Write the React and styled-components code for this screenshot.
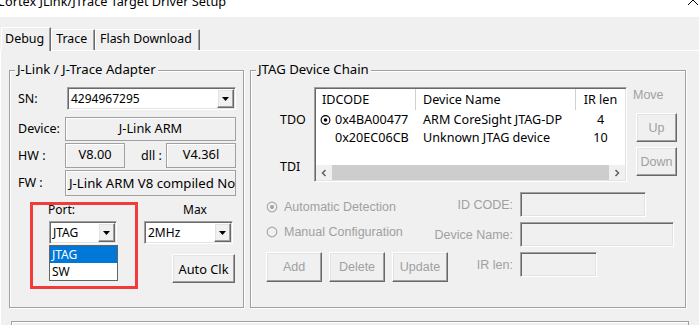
import React from 'react';
import styled, { createGlobalStyle, css } from 'styled-components';

const GlobalStyle = createGlobalStyle`
  html, body {
    margin: 0;
    padding: 0;
    background: #f0f0f0;
  }
  body {
    font-family: "Noto Sans", "Liberation Sans", sans-serif;
    font-size: 12px;
    color: #000;
  }
`;

// classic win32 3d edges
const sunken = css`
  border: 1px solid;
  border-color: #a0a0a0 #fff #fff #a0a0a0;
  box-shadow: inset 1px 1px 0 #696969, inset -1px -1px 0 #e3e3e3;
`;

const raised = css`
  border: 1px solid;
  border-color: #fff #696969 #696969 #fff;
  box-shadow: inset -1px -1px 0 #a0a0a0, inset 1px 1px 0 #e3e3e3;
`;

const disabledText = css`
  font-family: "Liberation Sans", Arial, sans-serif;
  font-size: 12.5px;
  color: #a0a0a0;
`;

const Window = styled.div`
  width: 699px;
  height: 325px;
  overflow: hidden;
  background: #f0f0f0;
  display: flex;
  flex-direction: column;
`;

const TitleBar = styled.div`
  flex: none;
  height: 17px;
  background: #fff;
  display: flex;
  justify-content: space-between;
  align-items: flex-start;
  overflow: hidden;
`;

const TitleText = styled.span`
  margin: -5px 0 0 -3px;
  font-size: 12.7px;
  line-height: 12px;
  white-space: nowrap;
`;

const TabStrip = styled.div`
  flex: none;
  display: flex;
  align-items: flex-end;
  height: 23px;
  margin-top: 10px;
  padding-left: 1px;
  position: relative;
  z-index: 1;
`;

const Tab = styled.div`
  box-sizing: border-box;
  height: ${(p) => (p.$active ? 24 : 21)}px;
  margin-bottom: ${(p) => (p.$active ? -1 : 0)}px;
  padding: ${(p) => (p.$active ? '3px 6px 0 3px' : '1px 7px 0 4px')};
  border-top: 1px solid #fff;
  border-left: 1px solid #fff;
  border-right: 1px solid #696969;
  box-shadow: inset -1px 0 0 #a0a0a0;
  background: #f0f0f0;
  line-height: 16px;
  white-space: nowrap;
  font-size: ${(p) => (p.$active ? 12.5 : 12.3)}px;
`;

const TabPanel = styled.div`
  flex: 1;
  border-top: 1px solid #fff;
  border-left: 1px solid #fff;
  padding: 19px 0 0 8px;
`;

const GroupRow = styled.div`
  display: flex;
  gap: 6px;
`;

const Group = styled.div`
  position: relative;
  box-sizing: border-box;
  width: ${(p) => p.$w}px;
  height: 238px;
  border: 1px solid #a0a0a0;
  box-shadow: inset 1px 1px 0 #fff, 1px 1px 0 #fff;
  padding: 16px 0 0 ${(p) => p.$pad}px;
`;

const GroupTitle = styled.span`
  position: absolute;
  top: -9px;
  left: 5px;
  padding: 0 2px;
  background: #f0f0f0;
  font-size: 13.2px;
  line-height: 15px;
  white-space: nowrap;
`;

const FieldRow = styled.div`
  display: flex;
  align-items: center;
  height: ${(p) => p.$h}px;
  margin-top: ${(p) => p.$mt || 0}px;
`;

const Label = styled.span`
  flex: none;
  width: ${(p) => p.$w}px;
  margin-left: ${(p) => p.$ml || 0}px;
  font-size: 12.5px;
  line-height: 14px;
  white-space: nowrap;
`;

const StaticBox = styled.div`
  box-sizing: border-box;
  width: ${(p) => p.$w}px;
  height: 100%;
  border: 1px solid #a0a0a0;
  box-shadow: inset 1px 1px 0 #fff;
  display: flex;
  align-items: center;
  justify-content: ${(p) => (p.$left ? 'flex-start' : 'center')};
  padding: ${(p) => (p.$left ? '0 0 1px 3px' : '0 0 3px')};
  font-size: ${(p) => (p.$left ? 13.2 : 12.8)}px;
  overflow: hidden;
  white-space: nowrap;
`;

const Combo = styled.div`
  ${sunken};
  box-sizing: border-box;
  flex: none;
  width: ${(p) => p.$w}px;
  height: 23px;
  padding: 1px;
  background: #fff;
  display: flex;
`;

const ComboText = styled.span`
  flex: 1;
  padding-left: 2px;
  line-height: 19px;
  white-space: nowrap;
  overflow: hidden;
`;

const ComboButton = styled.span`
  ${raised};
  box-sizing: border-box;
  width: 17px;
  background: #f0f0f0;
  display: flex;
  align-items: center;
  justify-content: center;
`;

const Lower = styled.div`
  display: flex;
  gap: 6px;
  margin: 6px 0 0 12px;
`;

const Highlight = styled.div`
  box-sizing: border-box;
  width: 108px;
  height: 87px;
  border: 3px solid #f23b3b;
  padding-left: 16px;
  display: flex;
  flex-direction: column;
`;

const SmallLabel = styled.span`
  line-height: 14px;
  margin: ${(p) => p.$m};
  font-size: ${(p) => p.$size || 12}px;
`;

const DropList = styled.div`
  box-sizing: border-box;
  width: 69px;
  height: 36px;
  margin-top: 1px;
  border: 1px solid #646464;
  background: #fff;
  display: flex;
  flex-direction: column;
`;

const DropItem = styled.div`
  height: 17px;
  line-height: 17px;
  padding-left: 2px;
  background: ${(p) => (p.$sel ? '#0078d7' : 'transparent')};
  color: ${(p) => (p.$sel ? '#fff' : '#000')};
`;

const MaxColumn = styled.div`
  width: 91px;
  display: flex;
  flex-direction: column;
`;

const Button = styled.div`
  ${raised};
  box-sizing: border-box;
  flex: none;
  width: ${(p) => p.$w}px;
  height: ${(p) => p.$h || 29}px;
  margin: ${(p) => p.$m || 0};
  display: flex;
  align-items: center;
  justify-content: center;
  background: #f0f0f0;
  ${(p) => (p.$disabled ? disabledText : 'font-size: 12.8px;')}
`;

const ChainTop = styled.div`
  display: flex;
`;

const PinColumn = styled.div`
  box-sizing: border-box;
  width: 63px;
  padding-left: 29px;
  display: flex;
  flex-direction: column;
`;

const ListView = styled.div`
  ${sunken};
  box-sizing: border-box;
  width: 313px;
  height: 95px;
  padding: 1px;
  background: #fff;
  display: flex;
  flex-direction: column;
  font-size: 12.6px;
`;

const ListHeader = styled.div`
  display: flex;
  height: 21px;
  flex: none;
`;

const HeaderCell = styled.div`
  box-sizing: border-box;
  width: ${(p) => p.$w}px;
  flex: ${(p) => (p.$w ? 'none' : 1)};
  padding-left: ${(p) => p.$pad || 0}px;
  text-align: ${(p) => (p.$center ? 'center' : 'left')};
  border-right: ${(p) => (p.$w ? '1px solid #d0d0d0' : 'none')};
  line-height: 21px;
  white-space: nowrap;
  overflow: hidden;
`;

const ListBody = styled.div`
  flex: 1;
  padding-top: 1px;
`;

const ListRow = styled.div`
  display: flex;
  height: 18px;
  line-height: 18px;
`;

const Cell = styled.div`
  box-sizing: border-box;
  width: ${(p) => p.$w}px;
  flex: ${(p) => (p.$w ? 'none' : 1)};
  padding-left: ${(p) => p.$pad || 0}px;
  display: flex;
  align-items: center;
  justify-content: ${(p) => (p.$center ? 'center' : 'flex-start')};
  gap: 4px;
  white-space: nowrap;
  overflow: hidden;
`;

const ScrollBar = styled.div`
  flex: none;
  height: 15px;
  display: flex;
  background: #f0f0f0;
`;

const ScrollArrow = styled.div`
  width: 16px;
  display: flex;
  align-items: center;
  justify-content: center;
`;

const ScrollThumb = styled.div`
  flex: 1;
  background: #cdcdcd;
`;

const MoveColumn = styled.div`
  width: 44px;
  margin-left: 6px;
  display: flex;
  flex-direction: column;
`;

const DisabledLabel = styled.span`
  ${disabledText};
  line-height: 14px;
  white-space: nowrap;
  margin: ${(p) => p.$m || 0};
  text-align: ${(p) => p.$align || 'left'};
`;

const ChainBottom = styled.div`
  display: flex;
  margin-top: 10px;
`;

const ModeColumn = styled.div`
  box-sizing: border-box;
  flex: none;
  width: 177px;
  padding: 8px 0 0 15px;
  display: flex;
  flex-direction: column;
`;

const RadioRow = styled.div`
  display: flex;
  align-items: center;
  gap: 6px;
  height: 14px;
  margin-top: ${(p) => p.$mt}px;
`;

const ButtonRow = styled.div`
  display: flex;
  gap: 7px;
  margin-top: 13px;
`;

const ManualGrid = styled.div`
  display: grid;
  grid-template-columns: 85px auto;
  grid-auto-rows: 25px;
  column-gap: 7px;
  row-gap: 5px;
  align-items: center;
`;

const DisabledInput = styled.div`
  ${sunken};
  box-sizing: border-box;
  width: ${(p) => p.$w}px;
  height: 25px;
  background: #f0f0f0;
`;

const BottomBox = styled.div`
  width: 676px;
  height: 20px;
  margin: 13px 0 0 2px;
  border: 1px solid #a0a0a0;
  box-shadow: inset 1px 1px 0 #fff;
`;

const DownTriangle = () => (
  <svg width="7" height="4" viewBox="0 0 7 4">
    <polygon points="0,0 7,0 3.5,4" fill="#000" />
  </svg>
);

const Chevron = ({ dir }) => (
  <svg width="6" height="8" viewBox="0 0 6 8">
    <polyline
      points={dir === 'left' ? '4.5,1 1.5,4 4.5,7' : '1.5,1 4.5,4 1.5,7'}
      fill="none"
      stroke="#606060"
      strokeWidth="1.5"
    />
  </svg>
);

const Radio = ({ checked, disabled }) => (
  <svg width="12" height="12" viewBox="0 0 12 12">
    <circle
      cx="6"
      cy="6"
      r="4.8"
      fill={disabled ? '#f0f0f0' : '#fff'}
      stroke={disabled ? '#a8a8a8' : '#000'}
      strokeWidth="1.2"
    />
    {checked && <circle cx="6" cy="6" r="2" fill={disabled ? '#a0a0a0' : '#000'} />}
  </svg>
);

const ComboBox = ({ width, value }) => (
  <Combo $w={width}>
    <ComboText>{value}</ComboText>
    <ComboButton>
      <DownTriangle />
    </ComboButton>
  </Combo>
);

const devices = [
  { id: '0x4BA00477', name: 'ARM CoreSight JTAG-DP', ir: 4, selected: true },
  { id: '0x20EC06CB', name: 'Unknown JTAG device', ir: 10 }
];

class App extends React.Component {
  renderAdapter() {
    return (
      <Group $w={235} $pad={8}>
        <GroupTitle>J-Link / J-Trace Adapter</GroupTitle>
        <FieldRow $h={23}>
          <Label $w={49}>SN:</Label>
          <ComboBox width={169} value="4294967295" />
        </FieldRow>
        <FieldRow $h={24} $mt={7}>
          <Label $w={47}>Device:</Label>
          <StaticBox $w={171}>J-Link ARM</StaticBox>
        </FieldRow>
        <FieldRow $h={25} $mt={2}>
          <Label $w={47}>HW :</Label>
          <StaticBox $w={60}>V8.00</StaticBox>
          <Label $w={25} $ml={16}>dll :</Label>
          <StaticBox $w={70}>V4.36l</StaticBox>
        </FieldRow>
        <FieldRow $h={26} $mt={2}>
          <Label $w={47}>FW :</Label>
          <StaticBox $w={171} $left>J-Link ARM V8 compiled Nov 28 2014 21:14:32</StaticBox>
        </FieldRow>
        <Lower>
          <Highlight>
            <SmallLabel $m="-2px 0 0 -1px">Port:</SmallLabel>
            <div style={{ marginTop: 4 }}>
              <ComboBox width={68} value="JTAG" />
            </div>
            <DropList>
              <DropItem $sel>JTAG</DropItem>
              <DropItem>SW</DropItem>
            </DropList>
          </Highlight>
          <MaxColumn>
            <SmallLabel $m="1px 0 0 39px">Max</SmallLabel>
            <div style={{ marginTop: 4 }}>
              <ComboBox width={89} value="2MHz" />
            </div>
            <Button $w={63} $m="10px 0 0 28px">Auto Clk</Button>
          </MaxColumn>
        </Lower>
      </Group>
    );
  }

  renderChain() {
    return (
      <Group $w={436} $pad={0}>
        <GroupTitle>JTAG Device Chain</GroupTitle>
        <ChainTop>
          <PinColumn>
            <SmallLabel $m="26px 0 0 0" $size={12.5}>TDO</SmallLabel>
            <SmallLabel $m="33px 0 0 0" $size={12.5}>TDI</SmallLabel>
          </PinColumn>
          <ListView>
            <ListHeader>
              <HeaderCell $w={100} $pad={6}>IDCODE</HeaderCell>
              <HeaderCell $w={160} $pad={7}>Device Name</HeaderCell>
              <HeaderCell $center>IR len</HeaderCell>
            </ListHeader>
            <ListBody>
              {devices.map((d) => (
                <ListRow key={d.id}>
                  <Cell $w={100} $pad={4}>
                    <span style={{ width: 11, display: 'flex' }}>
                      {d.selected && <Radio checked />}
                    </span>
                    {d.id}
                  </Cell>
                  <Cell $w={160} $pad={7}>{d.name}</Cell>
                  <Cell $center>{d.ir}</Cell>
                </ListRow>
              ))}
            </ListBody>
            <ScrollBar>
              <ScrollArrow>
                <Chevron dir="left" />
              </ScrollArrow>
              <ScrollThumb />
              <ScrollArrow>
                <Chevron dir="right" />
              </ScrollArrow>
            </ScrollBar>
          </ListView>
          <MoveColumn>
            <DisabledLabel $m="1px 0 0 0">Move</DisabledLabel>
            <Button $w={41} $m="11px 0 0 3px" $disabled>Up</Button>
            <Button $w={41} $m="5px 0 0 3px" $disabled>Down</Button>
          </MoveColumn>
        </ChainTop>
        <ChainBottom>
          <ModeColumn>
            <RadioRow $mt={0}>
              <Radio checked disabled />
              <DisabledLabel>Automatic Detection</DisabledLabel>
            </RadioRow>
            <RadioRow $mt={11}>
              <Radio disabled />
              <DisabledLabel>Manual Configuration</DisabledLabel>
            </RadioRow>
            <ButtonRow>
              <Button $w={56} $h={30} $disabled>Add</Button>
              <Button $w={56} $h={30} $disabled>Delete</Button>
              <Button $w={56} $h={30} $disabled>Update</Button>
            </ButtonRow>
          </ModeColumn>
          <ManualGrid>
            <DisabledLabel $align="right">ID CODE:</DisabledLabel>
            <DisabledInput $w={126} />
            <DisabledLabel $align="right">Device Name:</DisabledLabel>
            <DisabledInput $w={154} />
            <DisabledLabel $align="right">IR len:</DisabledLabel>
            <DisabledInput $w={77} />
          </ManualGrid>
        </ChainBottom>
      </Group>
    );
  }

  render() {
    return (
      <Window>
        <GlobalStyle />
        <TitleBar>
          <TitleText>Cortex JLink/JTrace Target Driver Setup</TitleText>
          <svg width="12" height="7" viewBox="0 0 12 7" style={{ marginTop: -1 }}>
            <polyline points="1,6 6,1 11,6" fill="none" stroke="#000" strokeWidth="1" />
          </svg>
        </TitleBar>
        <TabStrip>
          <Tab $active>Debug</Tab>
          <Tab>Trace</Tab>
          <Tab>Flash Download</Tab>
        </TabStrip>
        <TabPanel>
          <GroupRow>
            {this.renderAdapter()}
            {this.renderChain()}
          </GroupRow>
          <BottomBox />
        </TabPanel>
      </Window>
    );
  }
}

export default App;
